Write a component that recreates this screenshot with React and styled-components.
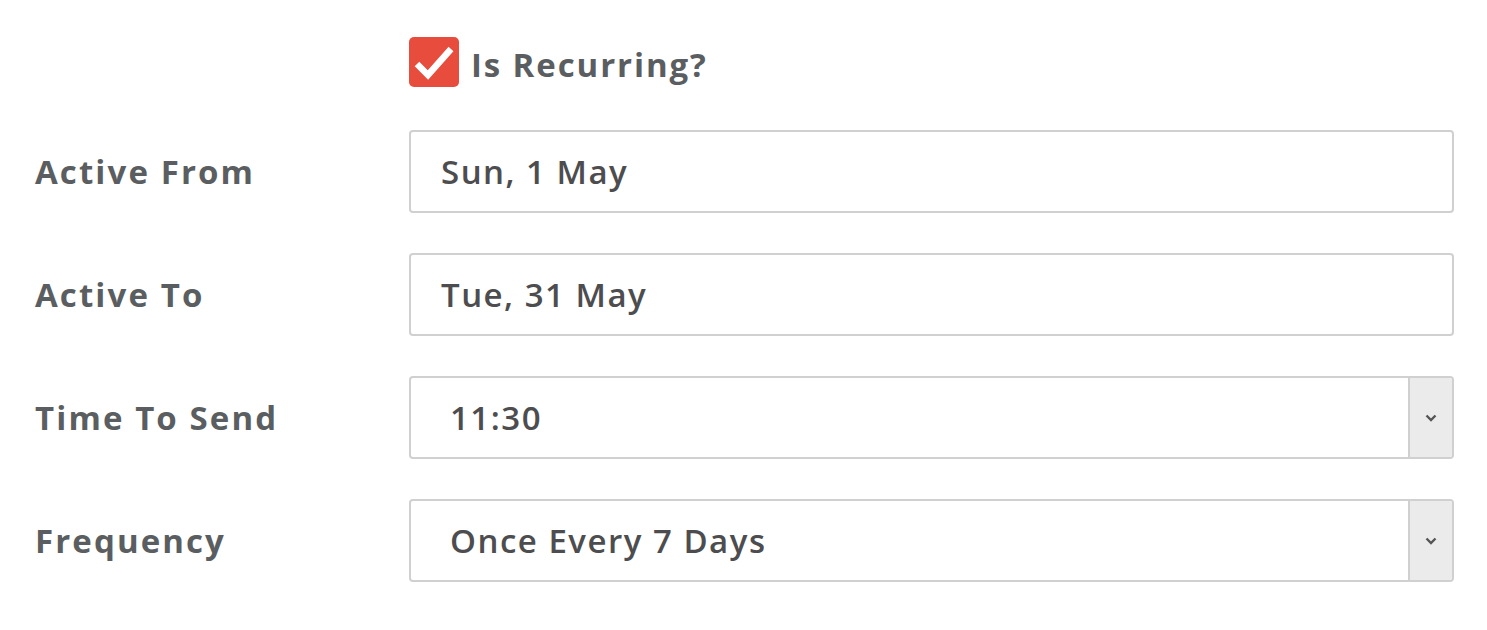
import React from 'react';
import styled, { createGlobalStyle } from 'styled-components';

const GlobalStyle = createGlobalStyle`
    body {
        margin: 0;
        background: #fff;
        font-family: "Open Sans", "Liberation Sans", sans-serif;
    }
`
const SForm = styled.div`
    display: grid;
    grid-template-columns: 374px 1fr;
    row-gap: 40px;
    align-items: center;
    padding: 37px 33px 0 35px;
`
const SCheckRow = styled.label`
    grid-column: 2;
    display: flex;
    align-items: center;
    gap: 12px;
    margin-bottom: 3px;
    color: #5b5e61;
    font-size: 33px;
    font-weight: 700;
    letter-spacing: 1.9px;
`
const SCheckText = styled.span`
    padding-top: 4px;
`
const SCheckBox = styled.span`
    width: 50px;
    height: 50px;
    border-radius: 5px;
    background: #e74c3c;
    display: flex;
    align-items: center;
    justify-content: center;
`
const SLabel = styled.div`
    color: #5b5e61;
    font-size: 33px;
    font-weight: 700;
    letter-spacing: 2.1px;
`
const SField = styled.div`
    height: 83px;
    box-sizing: border-box;
    border: 2px solid #d0d0d0;
    border-radius: 4px;
    display: flex;
    align-items: center;
    padding-left: ${props => props.select ? '39px' : '30px'};
    color: #4d4d4f;
    font-size: 33px;
    font-weight: 600;
    letter-spacing: 1.5px;
    overflow: hidden;
`
const SValue = styled.span`
    flex: 1;
`
const SArrow = styled.span`
    width: 42px;
    align-self: stretch;
    background: #ebebeb;
    border-left: 2px solid #d0d0d0;
    display: flex;
    align-items: center;
    justify-content: center;
`

const Chevron = () => (
    <svg width="12" height="8" viewBox="0 0 12 8">
        <path d="M1.5 1.5 L6 6 L10.5 1.5" fill="none" stroke="#555" strokeWidth="2.4" />
    </svg>
)

const rows = [
    { label: 'Active From', value: 'Sun, 1 May' },
    { label: 'Active To', value: 'Tue, 31 May' },
    { label: 'Time To Send', value: '11:30', select: true },
    { label: 'Frequency', value: 'Once Every 7 Days', select: true },
]

const App = () => {
    return (
        <React.Fragment>
            <GlobalStyle />
            <SForm>
                <SCheckRow>
                    <SCheckBox>
                        <svg width="40" height="40" viewBox="0 0 40 40">
                            <path d="M3 22 L14 33 L37 7" fill="none" stroke="#fff" strokeWidth="6.5" />
                        </svg>
                    </SCheckBox>
                    <SCheckText>Is Recurring?</SCheckText>
                </SCheckRow>
                {rows.map(row => (
                    <React.Fragment key={row.label}>
                        <SLabel>{row.label}</SLabel>
                        <SField select={row.select}>
                            <SValue>{row.value}</SValue>
                            {row.select && <SArrow><Chevron /></SArrow>}
                        </SField>
                    </React.Fragment>
                ))}
            </SForm>
        </React.Fragment>
    );
}

export default App;
